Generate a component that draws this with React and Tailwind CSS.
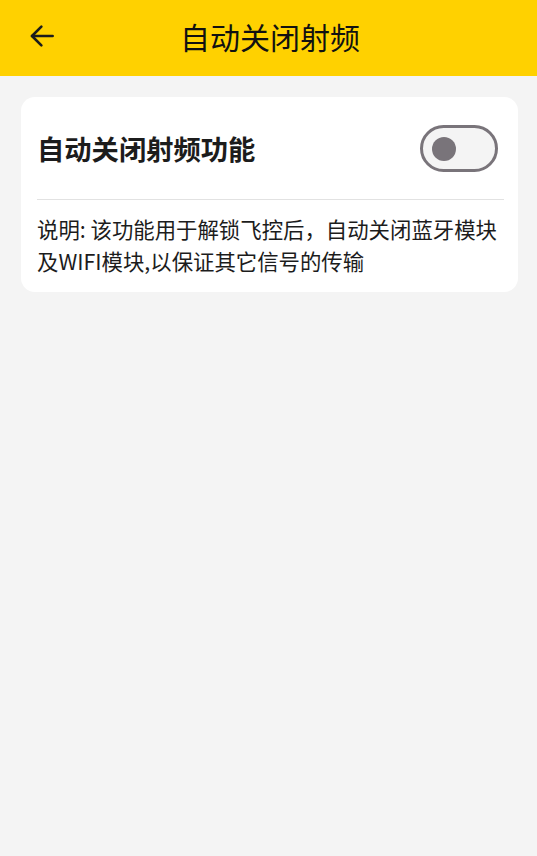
export default function App() {
  const font = { fontFamily: '"Noto Sans CJK SC", "Noto Sans", sans-serif' };
  return (
    <div className="min-h-[856px] w-full bg-[#f4f4f4]" style={font}>
      <div className="h-[76px] bg-[#FFD100] flex items-center pl-[27px] pr-[28px] pb-[5px]">
        <svg width="30" height="30" viewBox="0 0 24 24" fill="none" stroke="#1c1c1c" strokeWidth="2.1" strokeLinecap="round" strokeLinejoin="round">
          <path d="M20.5 12H4" />
          <path d="M11.5 4.5L4 12l7.5 7.5" />
        </svg>
        <div className="flex-1 text-center text-[30px] leading-none text-[#111] pl-[2px]">自动关闭射频</div>
        <div className="w-[28px]" />
      </div>
      <div className="pl-[21px] pr-[19px] pt-[21px]">
        <div className="bg-white rounded-[14px] pl-[16px] pr-[14px] pt-[28px] pb-[15px]">
          <div className="flex items-center justify-between pr-[6px]">
            <div className="text-[27.3px] font-bold text-[#1c1c1c] leading-none">自动关闭射频功能</div>
            <div className="w-[78px] h-[47px] rounded-full border-[3px] border-[#79747a] bg-[#f4f4f4] flex items-center pl-[9px] box-border">
              <div className="w-[24px] h-[24px] rounded-full bg-[#79747a]" />
            </div>
          </div>
          <div className="mt-[27px] h-px bg-[#e2e2e2]" />
          <div className="mt-[13px] text-[21.4px] leading-[32px] text-[#1c1c1c]">
            说明: 该功能用于解锁飞控后，自动关闭蓝牙模块及WIFI模块,以保证其它信号的传输
          </div>
        </div>
      </div>
    </div>
  );
}
